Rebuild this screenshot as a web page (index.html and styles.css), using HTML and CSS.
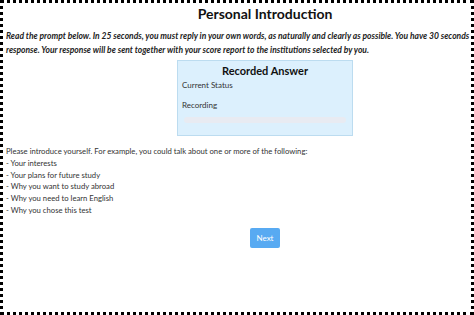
FILE: index.html
```html
<!DOCTYPE html>
<html lang="en">
<head>
    <meta charset="UTF-8">
    <meta name="viewport" content="width=device-width, initial-scale=1.0">
    <title>Personal Introduction</title>
    <link rel="stylesheet" href="styles.css">
</head>
<body>
    <div class="frame">
        <div class="page">
            <h1>Personal Introduction</h1>

            <p class="instructions">Read the prompt below. In 25 seconds, you must reply in your own words, as naturally and clearly as possible. You have 30 seconds<br>response. Your response will be sent together with your score report to the institutions selected by you.</p>

            <!-- Recorder panel -->
            <div class="recorder">
                <div class="recorder-title">Recorded Answer</div>
                <div class="recorder-label">Current Status</div>
                <div class="recorder-status">Recording</div>
                <div class="progress"></div>
            </div>

            <div class="prompt">
                Please introduce yourself. For example, you could talk about one or more of the following:<br>
                - Your interests<br>
                - Your plans for future study<br>
                - Why you want to study abroad<br>
                - Why you need to learn English<br>
                - Why you chose this test
            </div>

            <div class="actions">
                <button class="btn-next">Next</button>
            </div>
        </div>
    </div>
</body>
</html>
```

FILE: styles.css
```css
body {
    margin: 0;
    font-family: Lato, "Open Sans", Arial, sans-serif;
    color: #222;
    background: #fff;
}
.frame {
    width: 474px;
    height: 315px;
    box-sizing: border-box;
    border: 3px dotted #000;
    overflow: hidden;
}
.page {
    width: 518px;
    padding: 0 3px;
}
h1 {
    margin: 1px 0 0;
    text-align: center;
    font-size: 14px;
    font-weight: bold;
    line-height: 20px;
    color: #111;
}
.instructions {
    width: 464px;
    margin: 5px 0 0;
    font-size: 8.5px;
    line-height: 14px;
    font-style: italic;
    font-weight: bold;
    white-space: nowrap;
    color: #222;
}
.recorder {
    width: 166px;
    margin: 3px auto 0;
    padding: 2px 4px 12px;
    background: #dcf0fd;
    border: 1px solid #bcdcf0;
}
.recorder-title {
    text-align: center;
    font-size: 11px;
    font-weight: bold;
    line-height: 16px;
    color: #111;
}
.recorder-label,
.recorder-status {
    font-size: 8px;
    line-height: 12px;
    color: #333;
}
.recorder-status {
    margin-top: 8px;
}
.progress {
    height: 6px;
    margin: 6px 2px 0;
    background: #e8ebf2;
    border-radius: 3px;
}
.prompt {
    margin-top: 10px;
    font-size: 7.7px;
    line-height: 11.8px;
    color: #333;
}
.actions {
    margin-top: 8px;
    text-align: center;
}
.btn-next {
    font-family: inherit;
    font-size: 8px;
    color: #fff;
    background: #58aaf2;
    border: 0;
    border-radius: 2px;
    padding: 5px 6px;
}
```
